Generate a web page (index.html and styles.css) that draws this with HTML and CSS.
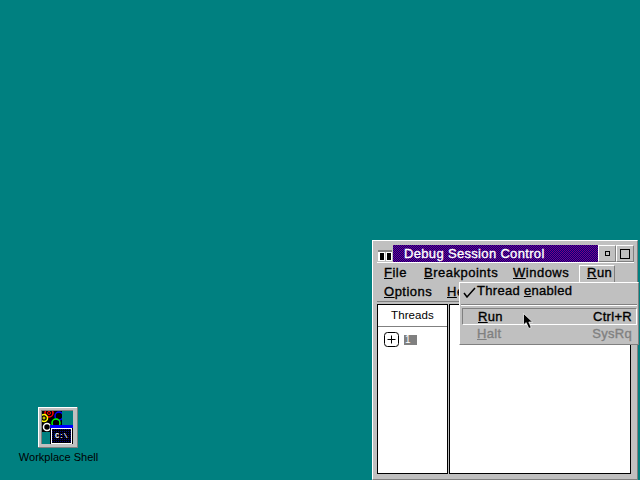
FILE: index.html
```html
<!DOCTYPE html>
<html lang="en">
<head>
<meta charset="utf-8">
<title>Debug Session Control</title>
<link rel="stylesheet" href="styles.css">
</head>
<body>
<main class="desktop">
  <figure class="shortcut">
    <svg class="shortcut-icon" width="40" height="41" viewBox="0 0 40 41" aria-hidden="true">
      <defs><clipPath id="pic"><rect x="4" y="4" width="20" height="21"/></clipPath>
      <pattern id="dots" width="2" height="2" patternUnits="userSpaceOnUse"><rect width="2" height="2" fill="#000"/><rect width="1" height="1" fill="#000080"/></pattern></defs>
      <rect width="40" height="41" fill="#c0c0c0"/>
      <path d="M0 0H40V1H1V41H0Z" fill="#fff"/>
      <path d="M40 41H0V40H39V0H40Z" fill="#808080"/>
      <rect x="4" y="4" width="31" height="33" fill="#008080"/>
      <path d="M3 37V3H35V4H4V37Z" fill="#808080"/>
      <rect x="4" y="4" width="20" height="21" fill="#000"/>
      <g clip-path="url(#pic)" fill="none">
        <circle cx="11" cy="6" r="4" stroke="#f00" stroke-width="1.5"/>
        <circle cx="11" cy="6" r="1.5" stroke="#f00"/>
        <circle cx="21" cy="9" r="4" stroke="#00f" stroke-width="1.5"/>
        <circle cx="6" cy="11" r="3.5" stroke="#ff0" stroke-width="1.5"/>
        <circle cx="6" cy="11" r="1" stroke="#ff0"/>
        <circle cx="18" cy="16" r="4" stroke="#0f0" stroke-width="1.5"/>
        <circle cx="9" cy="20" r="3.5" stroke="#fff" stroke-width="1.5"/>
      </g>
      <rect x="12" y="18" width="23" height="3" fill="#00f"/>
      <rect x="12" y="21" width="23" height="16" fill="#000"/>
      <rect x="13.5" y="21.5" width="20" height="15" fill="url(#dots)" stroke="#fff"/>
      <text class="dos-prompt" x="17" y="31">C:\</text>
    </svg>
    <figcaption class="shortcut-label">Workplace Shell</figcaption>
  </figure>

  <section class="window">
    <header class="titlebar">
      <div class="sysmenu">
        <svg width="16" height="17" viewBox="0 0 16 17" aria-hidden="true">
          <rect width="16" height="17" fill="#c0c0c0"/>
          <rect x="1" y="5" width="14" height="2" fill="#808080"/>
          <path d="M1 7H8V16H1ZM9 7H15V16H9Z" fill="#fff"/>
          <path d="M3 8H7V15H3ZM10 8H14V15H10Z" fill="#000"/>
        </svg>
      </div>
      <h1 class="title">Debug Session Control</h1>
      <button class="winbtn" aria-label="Minimize"><span class="min-glyph"></span></button>
      <button class="winbtn" aria-label="Maximize"><span class="max-glyph"></span></button>
    </header>
    <nav class="menubar">
      <div class="menu-row">
        <span class="menu-entry entry-file"><u>F</u>ile</span>
        <span class="menu-entry entry-break"><u>B</u>reakpoints</span>
        <span class="menu-entry entry-windows"><u>W</u>indows</span>
        <span class="menu-entry entry-run"><u>R</u>un</span>
      </div>
      <div class="menu-row">
        <span class="menu-entry entry-options"><u>O</u>ptions</span>
        <span class="menu-entry entry-help"><u>H</u>elp</span>
      </div>
    </nav>
    <div class="panes">
      <div class="pane pane-threads">
        <div class="pane-head">Threads</div>
        <div class="tree-row">
          <svg width="15" height="15" viewBox="0 0 15 15" aria-hidden="true">
            <rect x="0.5" y="0.5" width="14" height="14" rx="3" fill="#fff" stroke="#000"/>
            <path d="M7.5 3.5V11.5M3.5 7.5H11.5" stroke="#000"/>
          </svg>
          <span class="tree-label">1</span>
        </div>
      </div>
      <div class="pane pane-main"></div>
    </div>
  </section>

  <div class="dropdown">
    <div class="drop-item item-check">
      <svg width="13" height="11" viewBox="0 0 13 11" aria-hidden="true"><path d="M1 6L4 10L12 1" fill="none" stroke="#000" stroke-width="1.5"/></svg>
      <span>Thread <u>e</u>nabled</span>
    </div>
    <hr class="drop-sep">
    <div class="drop-item item-run"><span><u>R</u>un</span><span>Ctrl+R</span></div>
    <div class="drop-item item-halt"><span><u>H</u>alt</span><span>SysRq</span></div>
  </div>

  <svg class="cursor" width="11" height="17" viewBox="0 0 11 17" aria-hidden="true">
    <path d="M0.5 0.5V12L3.2 9.6L5.8 15.5L8.2 14.5L5.8 9H9.5Z" fill="#000" stroke="#fff" stroke-width="0.7"/>
  </svg>
</main>
</body>
</html>
```
FILE: styles.css
```css
* { box-sizing: border-box; }
html, body { margin: 0; padding: 0; }
body { width: 640px; height: 480px; overflow: hidden; }
.desktop {
  position: relative;
  width: 640px;
  height: 480px;
  overflow: hidden;
  background: #008080;
  font-family: "Liberation Sans", Arial, sans-serif;
  color: #000;
}

/* desktop shortcut */
.shortcut {
  position: absolute;
  left: 8px;
  top: 407px;
  width: 100px;
  margin: 0;
  display: flex;
  flex-direction: column;
  align-items: center;
  gap: 2px;
}
.shortcut-icon { display: block; }
.shortcut-label { font-size: 11px; line-height: 14px; white-space: nowrap; padding-left: 1px; }
.dos-prompt { font-family: "Liberation Mono", monospace; font-size: 7px; font-weight: 700; fill: #fff; }

/* window */
.window {
  position: absolute;
  left: 372px;
  top: 240px;
  width: 266px;
  height: 240px;
  background: #c0c0c0;
  border-top: 1px solid #fff;
  border-left: 1px solid #fff;
  border-right: 1px solid #808080;
  border-bottom: 1px solid #808080;
  padding: 4px 3px 5px 4px;
  display: flex;
  flex-direction: column;
}
.titlebar {
  display: flex;
  height: 17px;
  flex: none;
}
.sysmenu { width: 16px; height: 17px; flex: none; }
.sysmenu svg { display: block; }
.title {
  flex: 1;
  margin: 0;
  padding-left: 11px;
  font-size: 13px;
  font-weight: 400;
  -webkit-text-stroke: 0.35px #fff;
  line-height: 17px;
  color: #fff;
  letter-spacing: 0.33px;
  white-space: nowrap;
  overflow: hidden;
  background-color: #800080;
  background-image:
    linear-gradient(45deg, #000080 25%, transparent 25%, transparent 75%, #000080 75%),
    linear-gradient(45deg, #000080 25%, transparent 25%, transparent 75%, #000080 75%);
  background-size: 2px 2px;
  background-position: 0 0, 1px 1px;
}
.winbtn {
  width: 18px;
  height: 17px;
  flex: none;
  padding: 0;
  margin: 0;
  background: #c0c0c0;
  border-top: 1px solid #fff;
  border-left: 1px solid #fff;
  border-right: 1px solid #808080;
  border-bottom: 1px solid #808080;
  display: flex;
  align-items: center;
  justify-content: center;
}
.min-glyph { display: block; width: 5px; height: 5px; border: 1px solid #000; }
.max-glyph { display: block; width: 10px; height: 10px; border: 1px solid #000; }

.menubar {
  height: 40px;
  flex: none;
  border-top: 1px solid #fff;
  border-bottom: 1px solid #808080;
  padding-left: 2px;
  font-size: 13px;
  font-weight: 400;
  -webkit-text-stroke: 0.35px #000;
  letter-spacing: 0.5px;
  line-height: 19px;
}
.menu-row { display: flex; height: 19px; }
.menu-entry { padding-left: 5px; white-space: nowrap; }
.entry-file { width: 40px; }
.entry-break { width: 89px; }
.entry-windows { width: 71px; }
.entry-options { width: 63px; }
.entry-run {
  width: 36px;
  padding-left: 7px;
  border-top: 1px solid #fff;
  border-left: 1px solid #fff;
  border-right: 1px solid #808080;
  line-height: 14px;
  margin-top: 2px;
}

.panes {
  flex: 1;
  display: flex;
  gap: 1px;
  padding-top: 2px;
  padding-right: 3px;
  background: #c0c0c0;
}
.pane { background: #fff; border: 1px solid #000; }
.pane-threads { width: 71px; flex: none; }
.pane-main { flex: 1; }
.pane-head {
  height: 22px;
  border-bottom: 1px solid #808080;
  text-align: center;
  font-size: 11.5px;
  letter-spacing: 0.1px;
  line-height: 21px;
}
.tree-row {
  display: flex;
  align-items: center;
  gap: 5px;
  padding: 5px 0 0 6px;
}
.tree-row svg { display: block; }
.tree-label {
  width: 13px;
  height: 10px;
  padding-left: 1px;
  background: #808080;
  color: #fff;
  font-size: 10px;
  line-height: 10px;
}

/* open menu */
.dropdown {
  position: absolute;
  left: 459px;
  top: 282px;
  width: 180px;
  height: 63px;
  background: #c0c0c0;
  border-top: 1px solid #fff;
  border-left: 1px solid #fff;
  border-right: 1px solid #808080;
  border-bottom: 1px solid #808080;
  font-size: 13px;
  font-weight: 400;
  -webkit-text-stroke: 0.35px currentColor;
  letter-spacing: 0.3px;
  line-height: 17px;
}
.drop-item {
  display: flex;
  justify-content: space-between;
  align-items: center;
  padding: 0 6px 0 17px;
  height: 17px;
}
.item-check {
  position: relative;
  justify-content: flex-start;
  height: 15px;
}
.item-check svg { position: absolute; left: 3px; top: 4px; }
.drop-sep {
  margin: 6px 1px 2px 1px;
  height: 2px;
  border: 0;
  border-top: 1px solid #808080;
  border-bottom: 1px solid #fff;
}
.item-run {
  margin: 0 1px 0 2px;
  padding: 0 4px 0 15px;
  border: 1px solid;
  border-color: #808080 #fff #fff #808080;
}
.item-halt { color: #808080; }

.cursor { position: absolute; left: 523px; top: 313px; }
```
